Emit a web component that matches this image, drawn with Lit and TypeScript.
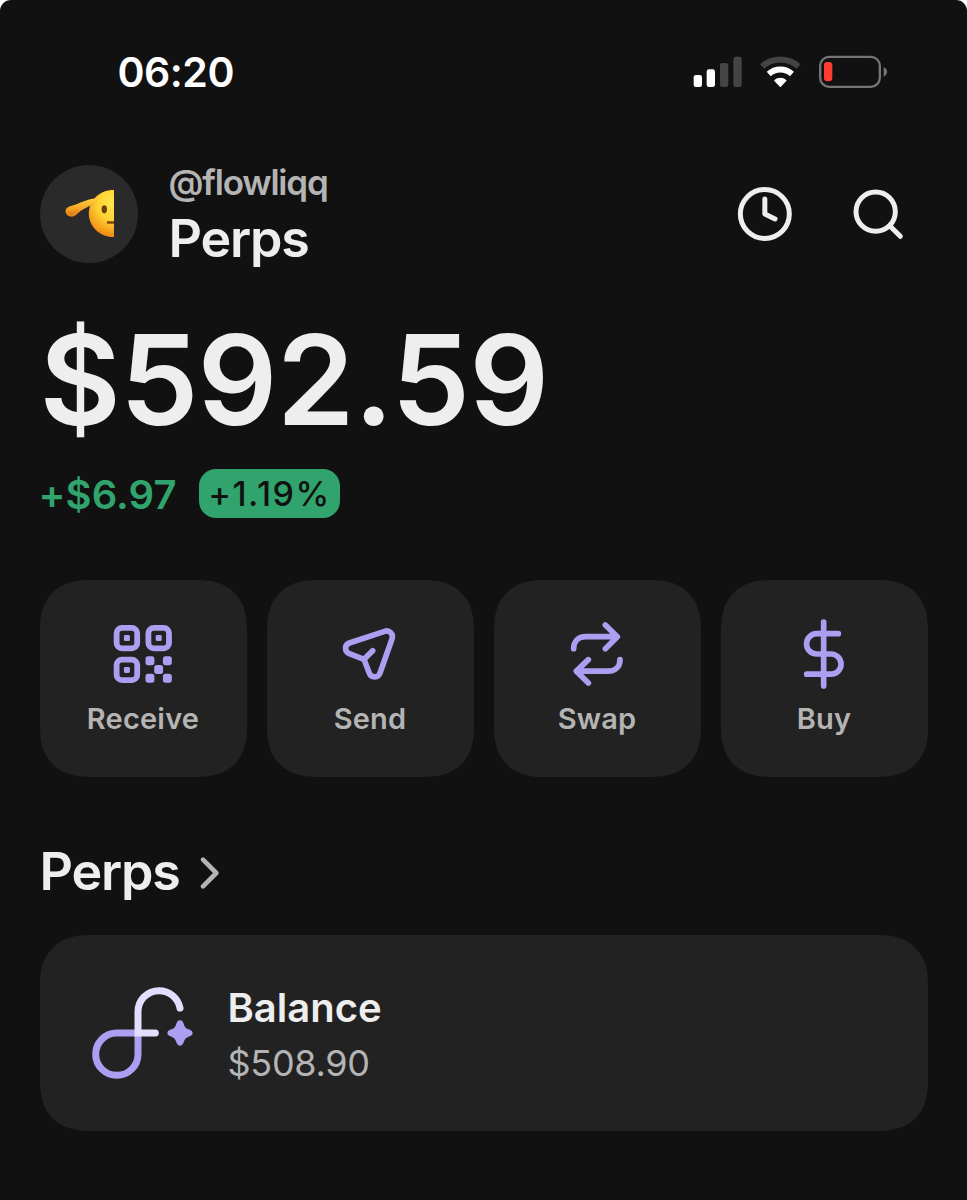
import { LitElement, html, css, svg } from "lit";
import { customElement } from "lit/decorators.js";

const receiveIcon = svg`
  <svg class="icon" viewBox="107 618 72 72" fill="none">
    <g stroke="#ab9ff2" stroke-width="5.800">
      <rect x="116.600" y="627.900" width="20.600" height="20.400" rx="5.400"/>
      <rect x="148.400" y="627.900" width="20.600" height="20.400" rx="5.400"/>
      <rect x="116.600" y="659.700" width="20.600" height="20.400" rx="5.400"/>
    </g>
    <g fill="#ab9ff2">
      <rect x="123.900" y="635.100" width="6" height="6" rx="1.400"/>
      <rect x="155.700" y="635.100" width="6" height="6" rx="1.400"/>
      <rect x="123.900" y="666.900" width="6" height="6" rx="1.400"/>
      <rect x="145.500" y="656.300" width="8.900" height="8.900" rx="2.600"/>
      <rect x="162.900" y="656.300" width="8.900" height="8.900" rx="2.600"/>
      <rect x="154.200" y="665" width="8.900" height="8.900" rx="2.600"/>
      <rect x="145.500" y="673.800" width="8.900" height="8.900" rx="2.600"/>
      <rect x="162.900" y="673.800" width="8.900" height="8.900" rx="2.600"/>
    </g>
  </svg>`;

const sendIcon = svg`
  <svg class="icon" viewBox="223 144 216 216" fill="none" stroke="#ab9ff2" stroke-width="17" stroke-linecap="round" stroke-linejoin="round">
    <path d="M269 219 L375 184 A17.500 17.500 0 0 1 397 207 L361 309 A17 17 0 0 1 329 310 L313 268 L269 251 A17 17 0 0 1 269 219 Z M313 268 L339 242"/>
  </svg>`;

const swapIcon = svg`
  <svg class="icon" viewBox="229 143 216 216" fill="none" stroke="#ab9ff2" stroke-width="17" stroke-linecap="round" stroke-linejoin="round">
    <path d="M267 235 C267 213 281 199 303 199 H396 M362 164 L398 199.500 L362 235"/>
    <path d="M406 268 C406 289 392 302.500 370 302.500 H277 M311 268 L275 302.500 L311 338"/>
  </svg>`;

const buyIcon = svg`
  <svg class="icon" viewBox="233 143 216 216" fill="none" stroke="#ab9ff2" stroke-width="17" stroke-linecap="round" stroke-linejoin="round">
    <path d="M340 155 V347 M384 190 H319 A30.500 30.500 0 0 0 319 251 H362 A30.200 30.200 0 0 1 362 311.500 H289"/>
  </svg>`;

@customElement("app-root")
export class AppRoot extends LitElement {
  static styles = css`
    :host { display: block; background: #fff; }
    * { box-sizing: border-box; }
    svg { display: block; flex: none; }
    .screen {
      height: 1200px; width: 967px; overflow: hidden;
      background: #111; border-radius: 11px 11px 0 0;
      font-family: Inter, "Liberation Sans", sans-serif; font-weight: 600;
      color: #eee; white-space: nowrap; padding: 0 39.5px;
      font-kerning: normal;
    }
    .status { height: 144px; display: flex; justify-content: space-between; align-items: center; padding: 0 37.5px 0 78px; }
    .time { color: #fff; font-size: 41px; line-height: 48px; letter-spacing: -0.5px; }
    .header { display: flex; height: 120px; padding-top: 20px; }
    .avatar { width: 98px; height: 98px; border-radius: 50%; background: #2a2a2a; margin-top: 1px; }
    .names { margin-left: 31px; flex: 1; }
    .handle { font-size: 35px; line-height: 36px; color: #b4b4b4; font-weight: 600; letter-spacing: -1.2px; }
    .account { font-size: 52px; line-height: 56px; margin-top: 11px; letter-spacing: -1.2px; }
    .tools { display: flex; gap: 52px; padding: 18px 14.5px 0 0; }
    .amount { font-size: 125px; line-height: 124px; margin-top: 54px; margin-left: 0; letter-spacing: -0.9px; }
    .change { display: flex; align-items: center; height: 49px; margin-top: 27px; color: #30a46c; gap: 20px; }
    .delta { font-size: 40px; line-height: 48px; padding-top: 2px; width: 139px; letter-spacing: 0.1px; margin-left: -1px; margin-right: 1px; }
    .pill { width: 141px; height: 49px; border-radius: 17px; background: #30a46c; color: #111; font-size: 34px; line-height: 50px; text-align: center; font-weight: 500; letter-spacing: 1.5px; padding-left: 1px; }
    .actions { display: grid; grid-template-columns: repeat(4, 1fr); gap: 20px; margin-top: 62px; }
    .tile { height: 197px; border-radius: 42px; background: #222; padding-top: 38px; display: flex; flex-direction: column; align-items: center; }
    .icon { width: 72px; height: 72px; }
    .label { font-size: 29px; line-height: 36px; margin-top: 11px; color: #b4b4b4; font-weight: 600; letter-spacing: 0.2px; }
    .section { display: flex; align-items: center; height: 56px; margin-top: 67px; font-size: 52px; line-height: 56px; }
    .title { letter-spacing: -1.2px; }
    .section svg { margin-left: 18.5px; margin-top: 2px; }
    .card { height: 196px; margin-top: 35px; border-radius: 42px; background: #222; display: flex; align-items: center; padding-left: 48px; }
    .info { margin-left: 28px; padding-top: 2px; }
    .name { font-size: 40px; line-height: 48px; }
    .value { font-size: 36px; line-height: 44px; margin-top: 9px; font-weight: 400; color: #b4b4b4; letter-spacing: -0.3px; }
    @supports (corner-shape: superellipse(1.25)) {
      .tile, .card { border-radius: 50px; corner-shape: superellipse(1.25); }
    }
  `;

  render() {
    return html`
      <main class="screen">
        <div class="status">
          <span class="time">06:20</span>
          <svg width="200" height="50" viewBox="30 21 600 150" fill="none">
            <g fill="#fff"><rect x="41" y="105" width="25" height="36" rx="7"/><rect x="80" y="88" width="25" height="53" rx="7"/></g>
            <g fill="#444"><rect x="120" y="69" width="25" height="72" rx="7"/><rect x="160" y="50" width="25" height="91" rx="7"/></g>
            <path d="M246.300 79.200 A82.500 82.500 0 0 1 355.700 79.200" stroke="#444" stroke-width="18"/>
            <path d="M266.200 101.700 A52.500 52.500 0 0 1 335.800 101.700" stroke="#fff" stroke-width="18"/>
            <path d="M301 139 L284.500 121.500 A25 25 0 0 1 317.500 121.500 Z" fill="#fff" stroke="#fff" stroke-width="4" stroke-linejoin="round"/>
            <rect x="420.500" y="50.500" width="179" height="90" rx="27" stroke="#757575" stroke-width="7"/>
            <rect x="432" y="66" width="25" height="58" rx="10" fill="#ff3b30"/>
            <path d="M611 81 Q621 86 621 95.500 Q621 105 611 110 Z" fill="#757575"/>
          </svg>
        </div>

        <header class="header">
          <svg class="avatar" viewBox="39.500 165 98 98">
            <defs>
              <radialGradient id="face" gradientUnits="userSpaceOnUse" cx="114" cy="204" r="33">
                <stop offset="0" stop-color="#ffe84f"/><stop offset="0.5" stop-color="#ffd335"/><stop offset="1" stop-color="#f08a12"/>
              </radialGradient>
              <linearGradient id="hand" x1="0" y1="0" x2="0" y2="1">
                <stop offset="0" stop-color="#ffd03c"/><stop offset="0.5" stop-color="#f7aa28"/><stop offset="1" stop-color="#de7c18"/>
              </linearGradient>
            </defs>
            <path d="M113.500 190 V237 C100 237.500 88.300 227 88.300 213.500 C88.300 200 100 189.500 113.500 190 Z" fill="url(#face)"/>
            <ellipse cx="103.800" cy="209.300" rx="2.700" ry="4.100" fill="#6b3f08"/>
            <path d="M106.500 222.500 H113.500" stroke="#7a4708" stroke-width="2.400"/>
            <path d="M65 211.500 C65 208 68 206.500 72 205.500 C79 203.500 86 199 95 198.500 C97 199.500 96 202 93 204 C87 207 81 209.500 77 213.500 C74 218 66 218 65 211.500 Z" fill="url(#hand)"/>
            <path d="M68 212.500 C72 214.500 75 212 76 209.500" fill="none" stroke="#d67b1b" stroke-width="0.900"/>
          </svg>
          <div class="names">
            <div class="handle">@flowliqq</div>
            <div class="account">Perps</div>
          </div>
          <div class="tools">
            <svg width="64" height="64" viewBox="40 36 192 192" fill="none" stroke="#eee" stroke-width="15" stroke-linecap="round" stroke-linejoin="round">
              <circle cx="135.500" cy="132" r="73.500"/><path d="M135.500 87 V132 L166 147"/>
            </svg>
            <svg width="64" height="64" viewBox="388 36 192 192" fill="none" stroke="#eee" stroke-width="15" stroke-linecap="round">
              <circle cx="468" cy="125" r="59"/><path d="M510 167 L542 199"/>
            </svg>
          </div>
        </header>

        <div class="amount">$592.59</div>
        <div class="change">
          <span class="delta">+$6.97</span>
          <span class="pill">+1.19%</span>
        </div>

        <nav class="actions">
          <div class="tile">${receiveIcon}<span class="label">Receive</span></div>
          <div class="tile">${sendIcon}<span class="label">Send</span></div>
          <div class="tile">${swapIcon}<span class="label">Swap</span></div>
          <div class="tile">${buyIcon}<span class="label">Buy</span></div>
        </nav>

        <div class="section">
          <span class="title">Perps</span>
          <svg width="24" height="36" viewBox="504 44 72 108" fill="none" stroke="#b4b4b4" stroke-width="14" stroke-linecap="round" stroke-linejoin="round">
            <path d="M519 58 L559 98 L519 138"/>
          </svg>
        </div>

        <section class="card">
          <svg width="112" height="112" viewBox="23 20 336 336" fill="none" stroke-width="21" stroke-linecap="round">
            <path d="M173 188 H109.500 A63.500 63.500 0 1 0 173 251.500 V188" stroke="#ab9ff2" stroke-linecap="butt"/>
            <path d="M225 188 H173 V124 A63 63 0 0 1 236 61 C268 61 293 83 299 113" stroke="#e2dffe" stroke-linejoin="miter"/>
            <path d="M299 150 C306 150 309 156 311 163 C314 171 317 174 325 177 C332 180 337 182 337 188 C337 194 332 196 325 199 C317 202 314 205 311 213 C309 220 306 226 299 226 C292 226 289 220 287 213 C284 205 281 202 273 199 C266 196 261 194 261 188 C261 182 266 180 273 177 C281 174 284 171 287 163 C289 156 292 150 299 150 Z" fill="#ab9ff2"/>
          </svg>
          <div class="info">
            <div class="name">Balance</div>
            <div class="value">$508.90</div>
          </div>
        </section>
      </main>`;
  }
}
